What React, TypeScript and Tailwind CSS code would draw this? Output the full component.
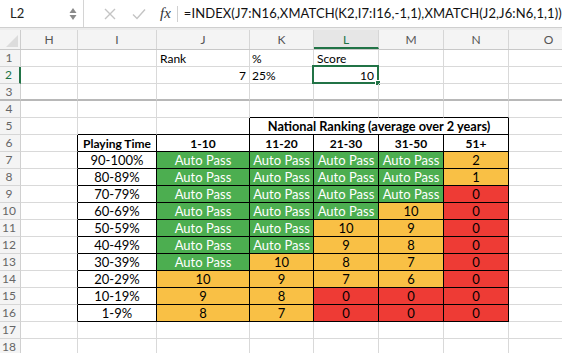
import React from 'react';

type Col = { key: string; w: string };

const cols: Col[] = [
  { key: 'H', w: 'w-[57px]' },
  { key: 'I', w: 'w-[79px]' },
  { key: 'J', w: 'w-[93px]' },
  { key: 'K', w: 'w-[64px]' },
  { key: 'L', w: 'w-[65px]' },
  { key: 'M', w: 'w-[65px]' },
  { key: 'N', w: 'w-[65px]' },
  { key: 'O', w: 'w-[80px]' },
];

const playing = ['90-100%', '80-89%', '70-79%', '60-69%', '50-59%', '40-49%', '30-39%', '20-29%', '10-19%', '1-9%'];
const grid: string[][] = [
  ['A', 'A', 'A', 'A', '2'],
  ['A', 'A', 'A', 'A', '1'],
  ['A', 'A', 'A', 'A', '0'],
  ['A', 'A', 'A', '10', '0'],
  ['A', 'A', '10', '9', '0'],
  ['A', 'A', '9', '8', '0'],
  ['A', '10', '8', '7', '0'],
  ['10', '9', '7', '6', '0'],
  ['9', '8', '0', '0', '0'],
  ['8', '7', '0', '0', '0'],
];
const ranks = ['1-10', '11-20', '21-30', '31-50', '51+'];

// which cell edges are drawn black (part of the table)
function blackRight(row: number, c: number) {
  if (row >= 6 && row <= 16 && c >= 0 && c <= 6) return true;
  if (row === 5 && c === 2) return true;
  return false;
}
function blackBottom(row: number, c: number) {
  if (row === 4 && c >= 3 && c <= 6) return true;
  if (row >= 5 && row <= 16 && c >= 1 && c <= 6) return true;
  return false;
}

function cellContent(row: number, c: number): { text?: string; cls?: string } {
  if (row === 1) {
    if (c === 2) return { text: 'Rank', cls: 'justify-start pl-[3px]' };
    if (c === 3) return { text: '%', cls: 'justify-start pl-[2px]' };
    if (c === 4) return { text: 'Score', cls: 'justify-start pl-[3px]' };
  }
  if (row === 2) {
    if (c === 2) return { text: '7', cls: 'justify-end pr-[3px]' };
    if (c === 3) return { text: '25%', cls: 'justify-start pl-[2px]' };
    if (c === 4) return { text: '10', cls: 'justify-end pr-[4px]' };
  }
  if (row === 6) {
    if (c === 1) return { text: 'Playing Time', cls: 'justify-center font-bold bg-white text-[12.5px]' };
    if (c >= 2 && c <= 6) return { text: ranks[c - 2], cls: 'justify-center font-bold bg-white text-[12.5px]' };
  }
  if (row >= 7 && row <= 16) {
    const i = row - 7;
    if (c === 1) return { text: playing[i], cls: 'justify-center bg-white text-[13px]' };
    if (c >= 2 && c <= 6) {
      const v = grid[i][c - 2];
      if (v === 'A') return { text: 'Auto Pass', cls: 'justify-center bg-[#4cae50] text-white text-[13px]' };
      if (v === '0') return { text: '0', cls: 'justify-center bg-[#ee3b35] text-[13px]' };
      return { text: v, cls: 'justify-center bg-[#f9c045] text-[13px]' };
    }
  }
  return {};
}

function FormulaBar() {
  return (
    <div className="flex h-[28px] items-center border-b border-[#cfcfcf] bg-white">
      <div className="flex h-full w-[84px] items-center border-r border-[#d4d4d4] pl-[10px] pr-[6px]">
        <span className="flex-1 text-[13px] text-[#222]">L2</span>
        <svg width="8" height="14" viewBox="0 0 8 14" className="mt-[1px]">
          <path d="M4 1 L7.5 6 H0.5 Z" fill="#8a8a8a" />
          <path d="M4 13 L7.5 8 H0.5 Z" fill="#8a8a8a" />
        </svg>
      </div>
      <div className="flex h-full items-center pl-[20px]">
        <svg width="12" height="12" viewBox="0 0 12 12">
          <path d="M1 1 L11 11 M11 1 L1 11" stroke="#c4c4c4" strokeWidth="1.4" />
        </svg>
        <svg width="14" height="12" viewBox="0 0 14 12" className="ml-[16px]">
          <path d="M1 6.5 L5 10.5 L13 1.5" stroke="#c4c4c4" strokeWidth="1.4" fill="none" />
        </svg>
        <span className="ml-[14px] text-[15px] italic text-[#333] [font-family:'Liberation_Serif',serif]">fx</span>
        <div className="ml-[6px] h-[16px] w-px bg-[#d0d0d0]" />
        <span className="ml-[6px] text-[13px] tracking-[0.1px] text-[#111]">
          =INDEX(J7:N16,XMATCH(K2,I7:I16,-1,1),XMATCH(J2,J6:N6,1,1))
        </span>
      </div>
    </div>
  );
}

function HeaderRow() {
  return (
    <div className="flex h-[20px] border-b border-[#c8c8c8] bg-[#f4f4f4]">
      <div className="relative w-[21px] shrink-0 border-r border-[#cdcdcd]">
        <svg width="12" height="12" viewBox="0 0 12 12" className="absolute bottom-[2px] right-[2px]">
          <path d="M12 0 V12 H0 Z" fill="#dcdcdc" />
        </svg>
      </div>
      {cols.map((c) => {
        const sel = c.key === 'L';
        return (
          <div
            key={c.key}
            className={`${c.w} flex shrink-0 items-center justify-center border-r border-[#d6d6d6] text-[12px] ${
              sel ? 'border-b-2 border-b-[#217346] bg-[#e6e6e6] pt-[2px] text-[#217346]' : 'text-[#555]'
            }`}
          >
            {c.key}
          </div>
        );
      })}
    </div>
  );
}

function SheetRow({ row }: { row: number }) {
  const thick = row === 3;
  const selRow = row === 2;
  return (
    <div className="flex h-[17px]">
      <div
        className={`relative flex w-[21px] shrink-0 items-center justify-center border-r bg-[#f4f4f4] pr-[2px] text-[12px] ${
          thick ? 'border-b-2 border-b-[#b8b8b8]' : 'border-b border-b-[#d6d6d6]'
        } ${selRow ? 'border-r-[#217346] border-r-2 text-[#217346]' : 'border-r-[#d0d0d0] text-[#666]'}`}
      >
        {row}
      </div>
      {row === 5 ? (
        <>
          {[0, 1, 2].map((c) => (
            <Cell key={c} row={row} c={c} />
          ))}
          <div className="flex w-[259px] shrink-0 items-center justify-center border-r border-b border-r-black border-b-black pt-[1px] text-[12.75px] font-bold text-black">
            National Ranking (average over 2 years)
          </div>
          <Cell row={row} c={7} />
        </>
      ) : (
        cols.map((_, c) => <Cell key={c} row={row} c={c} />)
      )}
    </div>
  );
}

function Cell({ row, c }: { row: number; c: number }) {
  const { text, cls } = cellContent(row, c);
  const thick = row === 3;
  const r = blackRight(row, c) ? 'border-r-black' : 'border-r-[#d9d9d9]';
  const b = blackBottom(row, c)
    ? 'border-b border-b-black'
    : thick
      ? 'border-b-2 border-b-[#b8b8b8]'
      : 'border-b border-b-[#d9d9d9]';
  const sel = row === 2 && c === 4;
  return (
    <div
      className={`${cols[c].w} relative flex shrink-0 items-center overflow-visible whitespace-nowrap border-r pt-[1px] text-[12px] text-black ${r} ${b} ${cls ?? ''}`}
    >
      {text}
      {sel && (
        <>
          <div className="pointer-events-none absolute -left-[2px] -top-[2px] bottom-[-1px] right-[-1px] border-2 border-[#217346]" />
          <div className="absolute -bottom-[3px] -right-[3px] h-[6px] w-[6px] border border-white bg-[#217346]" />
        </>
      )}
    </div>
  );
}

export default function App() {
  const rows = Array.from({ length: 18 }, (_, i) => i + 1);
  return (
    <div className="h-[353px] w-[562px] overflow-hidden bg-white [font-family:Lato,'Open_Sans',sans-serif]">
      <FormulaBar />
      <div className="h-[2px] bg-[#ececec]" />
      <HeaderRow />
      {rows.map((r) => (
        <SheetRow key={r} row={r} />
      ))}
    </div>
  );
}
